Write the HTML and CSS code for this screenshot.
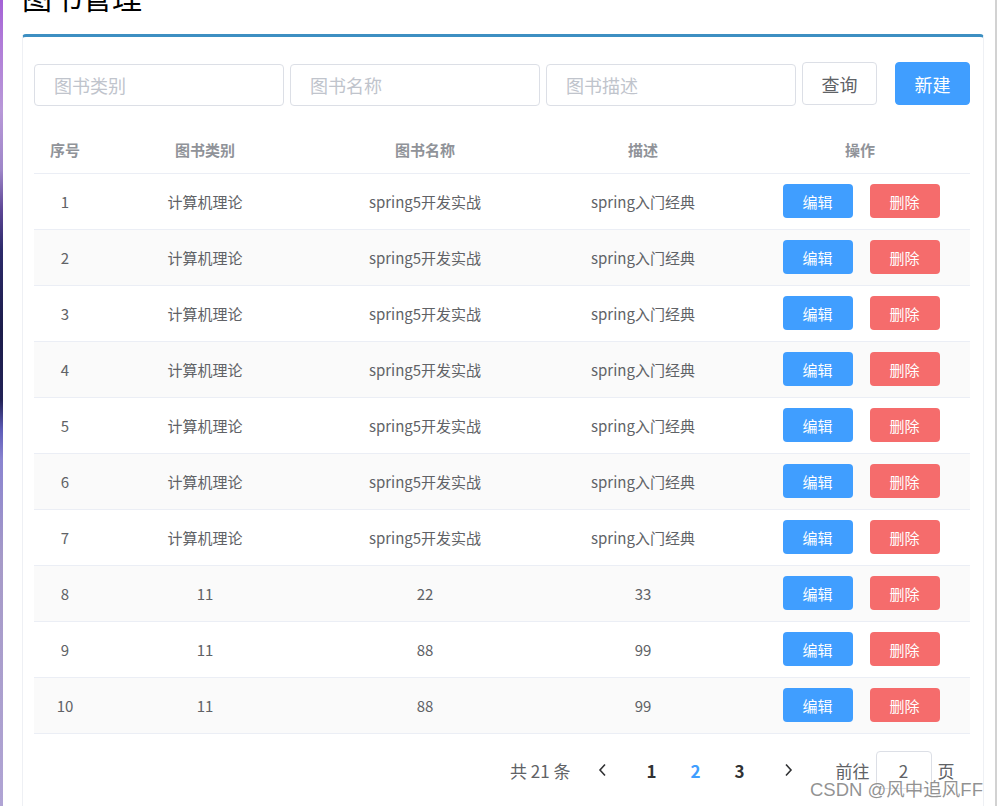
FILE: index.html
```html
<!DOCTYPE html>
<html lang="zh-CN">
<head>
<meta charset="utf-8">
<title>图书管理</title>
<link rel="stylesheet" href="styles.css">
</head>
<body>
<div class="page">
  <div class="strip"></div>
  <main class="main">
    <h2 class="title">图书管理</h2>
    <section class="card">
      <div class="toolbar">
        <input class="field" placeholder="图书类别">
        <input class="field" placeholder="图书名称">
        <input class="field" placeholder="图书描述">
        <button class="btn btn-plain">查询</button>
        <button class="btn btn-primary btn-new">新建</button>
      </div>
      <table class="grid">
        <colgroup>
          <col class="c1"><col class="c2"><col class="c3"><col class="c4"><col class="c5">
        </colgroup>
        <thead>
          <tr><th>序号</th><th>图书类别</th><th>图书名称</th><th>描述</th><th>操作</th></tr>
        </thead>
        <tbody>
          <tr><td>1</td><td>计算机理论</td><td>spring5开发实战</td><td>spring入门经典</td><td><div class="ops"><button class="op op-edit">编辑</button><button class="op op-del">删除</button></div></td></tr>
          <tr><td>2</td><td>计算机理论</td><td>spring5开发实战</td><td>spring入门经典</td><td><div class="ops"><button class="op op-edit">编辑</button><button class="op op-del">删除</button></div></td></tr>
          <tr><td>3</td><td>计算机理论</td><td>spring5开发实战</td><td>spring入门经典</td><td><div class="ops"><button class="op op-edit">编辑</button><button class="op op-del">删除</button></div></td></tr>
          <tr><td>4</td><td>计算机理论</td><td>spring5开发实战</td><td>spring入门经典</td><td><div class="ops"><button class="op op-edit">编辑</button><button class="op op-del">删除</button></div></td></tr>
          <tr><td>5</td><td>计算机理论</td><td>spring5开发实战</td><td>spring入门经典</td><td><div class="ops"><button class="op op-edit">编辑</button><button class="op op-del">删除</button></div></td></tr>
          <tr><td>6</td><td>计算机理论</td><td>spring5开发实战</td><td>spring入门经典</td><td><div class="ops"><button class="op op-edit">编辑</button><button class="op op-del">删除</button></div></td></tr>
          <tr><td>7</td><td>计算机理论</td><td>spring5开发实战</td><td>spring入门经典</td><td><div class="ops"><button class="op op-edit">编辑</button><button class="op op-del">删除</button></div></td></tr>
          <tr><td>8</td><td>11</td><td>22</td><td>33</td><td><div class="ops"><button class="op op-edit">编辑</button><button class="op op-del">删除</button></div></td></tr>
          <tr><td>9</td><td>11</td><td>88</td><td>99</td><td><div class="ops"><button class="op op-edit">编辑</button><button class="op op-del">删除</button></div></td></tr>
          <tr><td>10</td><td>11</td><td>88</td><td>99</td><td><div class="ops"><button class="op op-edit">编辑</button><button class="op op-del">删除</button></div></td></tr>
        </tbody>
      </table>
      <div class="pager">
        <span class="total">共 21 条</span>
        <button class="pg-nav pg-prev"><svg width="10" height="14" viewBox="0 0 10 14"><polyline points="7,1.5 2,7 7,12.5" fill="none" stroke="#303133" stroke-width="1.6"/></svg></button>
        <span class="pg">1</span>
        <span class="pg pg-active">2</span>
        <span class="pg">3</span>
        <button class="pg-nav pg-next"><svg width="10" height="14" viewBox="0 0 10 14"><polyline points="3,1.5 8,7 3,12.5" fill="none" stroke="#303133" stroke-width="1.6"/></svg></button>
        <span class="jump">前往</span>
        <span class="jump-box">2</span>
        <span class="jump-unit">页</span>
      </div>
    </section>
  </main>
  <div class="scrollbar"></div>
</div>
<div class="watermark">CSDN @风中追风FF</div>
</body>
</html>
```
FILE: styles.css
```css
html, body {
  margin: 0;
  padding: 0;
  height: 100%;
  overflow: hidden;
  background: #fff;
  font-family: "Noto Sans CJK SC", "Noto Sans", sans-serif;
  color: #606266;
}

.page {
  display: flex;
  height: 806px;
}

.strip {
  width: 3px;
  flex: none;
  background: linear-gradient(to bottom,
    #a461d6 0px, #b07ad8 40px, #b898d8 110px, #9e86c8 170px,
    #5d4695 210px, #2c2a6a 250px, #1c1c4a 330px, #222256 400px,
    #5e5cb8 430px, #8a84d0 460px, #a69ac8 560px, #b0a4d4 806px);
}

.main {
  flex: 1;
  padding: 0 11px 0 19px;
  min-width: 0;
}

.scrollbar {
  width: 2px;
  flex: none;
  background: #d2d2d2;
}

.title {
  margin: -19px 0 23px;
  font-size: 30px;
  line-height: 30px;
  font-weight: 400;
  color: #000;
}

.card {
  border: 1px solid #eef0f4;
  border-top: 3px solid #3d8fc2;
  border-radius: 4px 4px 0 0;
  padding: 0 12px 0 11px;
  height: 900px;
}

.toolbar {
  display: flex;
  align-items: flex-start;
  padding-top: 25px;
  height: 44px;
}

.field {
  width: 250px;
  height: 42px;
  box-sizing: border-box;
  margin: 2px 6px 0 0;
  border: 1px solid #dcdfe6;
  border-radius: 4px;
  padding: 0 19px;
  font-family: inherit;
  font-size: 18px;
  color: #606266;
  outline: none;
}

.field::placeholder {
  color: #c0c4cc;
}

.btn {
  width: 75px;
  height: 43px;
  box-sizing: border-box;
  border-radius: 4px;
  font-family: inherit;
  font-size: 18px;
  padding: 0;
  cursor: pointer;
}

.btn-plain {
  border: 1px solid #dcdfe6;
  background: #fff;
  color: #606266;
}

.btn-primary {
  border: 1px solid #409eff;
  background: #409eff;
  color: #fff;
}

.btn-new {
  margin-left: 18px;
}

.grid {
  margin-top: 21px;
  width: 936px;
  table-layout: fixed;
  border-collapse: collapse;
  font-size: 15px;
}

.c1 { width: 62px; }
.c2 { width: 218px; }
.c3 { width: 222px; }
.c4 { width: 214px; }
.c5 { width: 220px; }

.grid th {
  height: 45px;
  padding: 0 0 1px;
  color: #909399;
  font-weight: 700;
  text-align: center;
  border-bottom: 1px solid #ebeef5;
}

.grid td {
  height: 54px;
  padding: 0 0 1px;
  text-align: center;
  color: #606266;
  border-bottom: 1px solid #ebeef5;
}

.grid tbody tr:nth-child(even) td {
  background: #fafafa;
}

.ops {
  display: flex;
  justify-content: center;
  gap: 17px;
  padding-left: 2px;
}

.op {
  width: 70px;
  height: 34px;
  border: none;
  border-radius: 4px;
  color: #fff;
  font-family: inherit;
  font-size: 15px;
  padding: 0;
}

.op-edit { background: #409eff; }
.op-del { background: #f56c6c; }

.pager {
  display: flex;
  align-items: center;
  margin-top: 17px;
  height: 38px;
  padding-left: 476px;
  font-size: 17px;
  color: #606266;
}

.total {
  margin-right: 10px;
  white-space: nowrap;
}

.pg-nav {
  width: 44px;
  height: 38px;
  border: none;
  background: transparent;
  padding: 0;
  display: flex;
  align-items: center;
  justify-content: center;
}

.pg-prev { margin-right: 5px; }
.pg-next { margin-left: 4px; }

.pg {
  width: 44px;
  text-align: center;
  font-weight: 700;
  color: #303133;
}

.pg-active {
  color: #409eff;
}

.jump {
  margin-left: 26px;
}

.jump-box {
  width: 56px;
  height: 38px;
  box-sizing: border-box;
  margin: 0 6px;
  border: 1px solid #dcdfe6;
  border-radius: 4px;
  display: flex;
  align-items: center;
  justify-content: center;
}

.watermark {
  position: absolute;
  left: 810px;
  top: 775px;
  font-family: "Liberation Sans", "Noto Sans CJK SC", sans-serif;
  font-size: 18.5px;
  color: rgba(110, 110, 110, 0.75);
  text-shadow: 0 0 2px #fff;
  white-space: nowrap;
}
```
